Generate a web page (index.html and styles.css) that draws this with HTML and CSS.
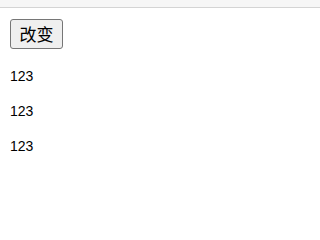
FILE: index.html
```html
<!DOCTYPE html>
<html>
<head>
<meta charset="utf-8">
<link rel="stylesheet" href="styles.css">
</head>
<body>
<div class="topbar"></div>
<div class="content">
  <button class="btn">改变</button>
  <p class="item">123</p>
  <p class="item">123</p>
  <p class="item">123</p>
</div>
</body>
</html>
```
FILE: styles.css
```css
html, body {
  margin: 0;
  padding: 0;
  background: #ffffff;
}
.topbar {
  height: 7px;
  background: #f6f6f6;
  border-bottom: 1px solid #d4d4d4;
}
.content {
  padding: 11px 10px 0 10px;
  display: flex;
  flex-direction: column;
  align-items: flex-start;
}
.btn {
  box-sizing: border-box;
  width: 53px;
  height: 30px;
  margin: 0;
  padding: 0;
  background: #efefef;
  border: 1px solid #767676;
  border-radius: 3px;
  font-family: "Noto Sans CJK SC", sans-serif;
  font-size: 17px;
  line-height: 28px;
  color: #000;
}
.item {
  margin: 17px 0 0 0;
  font-family: "Liberation Sans", Arial, sans-serif;
  font-size: 14px;
  line-height: 21px;
  color: #000;
}
.item + .item {
  margin-top: 14px;
}
```
